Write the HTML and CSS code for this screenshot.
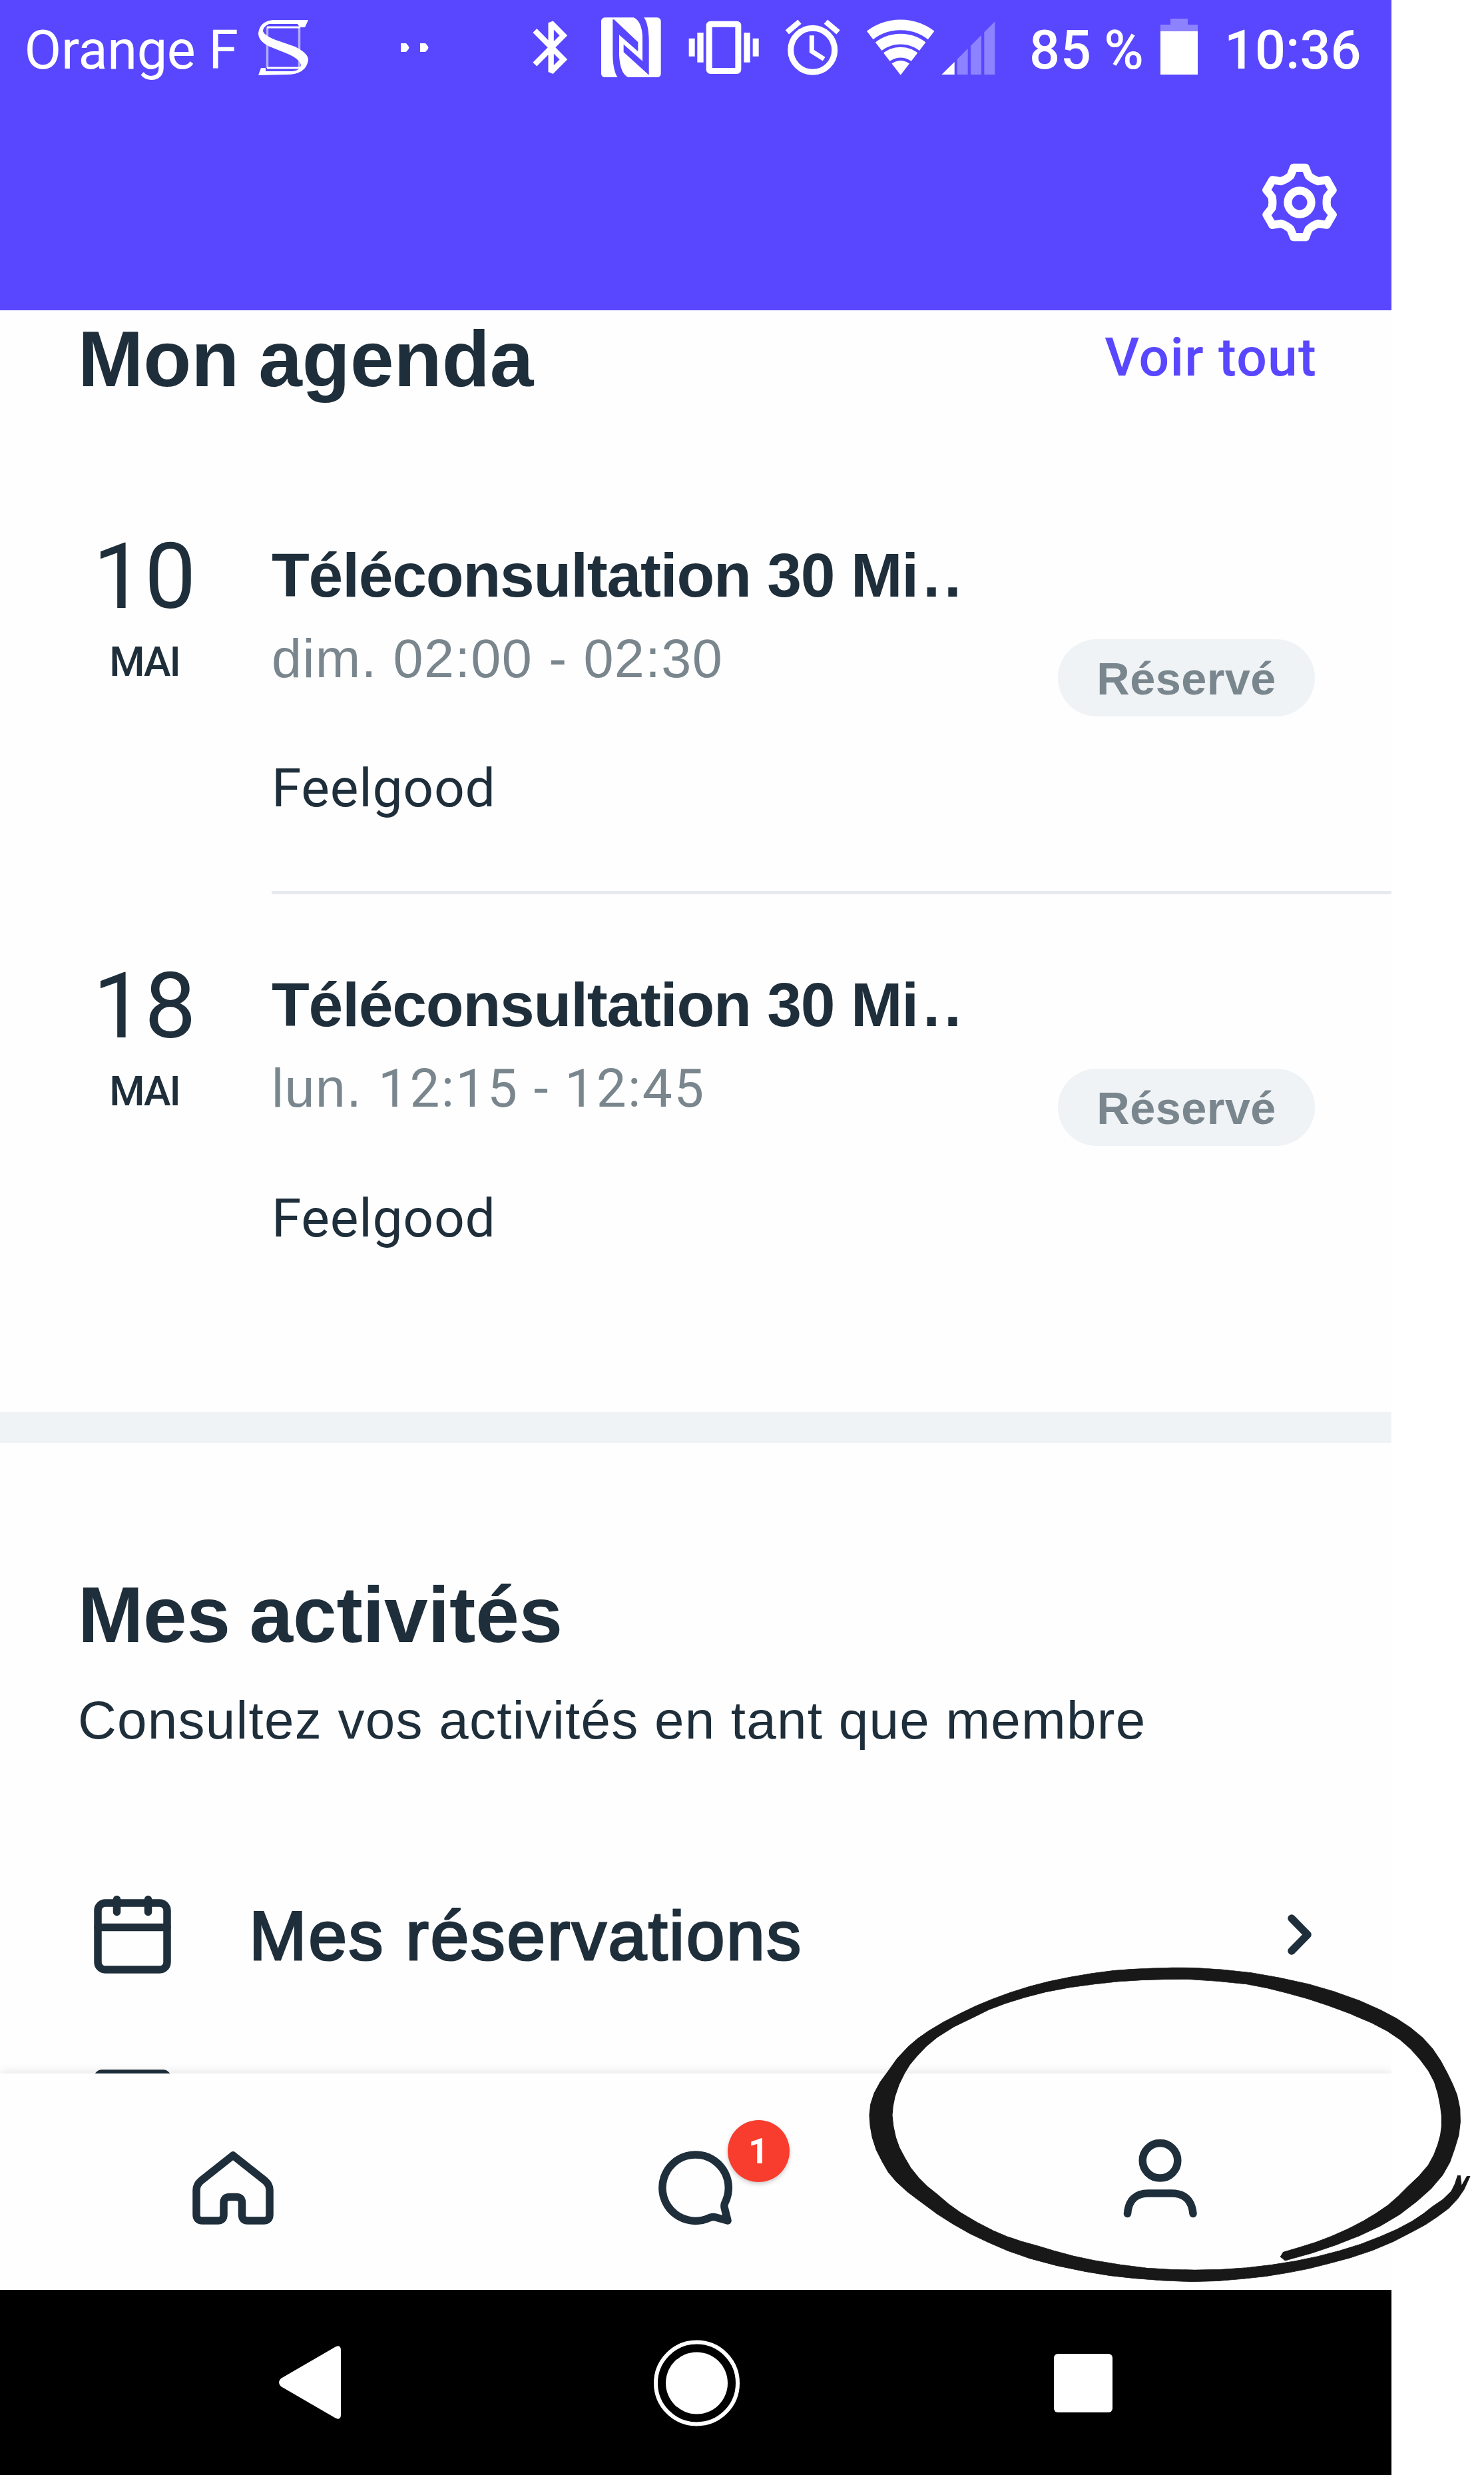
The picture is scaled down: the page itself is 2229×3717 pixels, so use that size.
FILE: index.html
```
<!DOCTYPE html>
<html lang="fr">
<head>
<meta charset="utf-8">
<title>Mon agenda</title>
<link rel="stylesheet" href="styles.css">
</head>
<body>
<div class="phone">
  <header class="topbar">
    <div class="status">
      <span class="carrier">Orange F</span>
      <svg class="status-icons" viewBox="380 0 1128 140" width="1128" height="140" fill="#fff">
        <!-- app notification -->
        <path d="M463 30 L458 41 H450 L447 36 H404 Q395 40 395 47 Q398 55 420 62 L443 70 Q463 80 463 90 Q460 112 430 112 L388 113 L392 102 H399 V107 H440 Q450 106 452 98 Q450 88 430 80 L405 70 Q388 62 388 50 Q390 32 410 30 Z"/>
        <path d="M401 41 H451 M401 102 H451" stroke="#fff" stroke-width="3"/>
        <path d="M401.500 41 V102 M449.500 41 V102" stroke="#fff" stroke-width="3.500" opacity=".55"/>
        <path d="M602 65 H610 Q614 69 614.500 71.500 Q614 74 610 78 H602 Z M631 65 H639 Q643 69 643.500 71.500 Q643 74 639 78 H631 Z"/>
        <g transform="translate(780 0) scale(.33333)">
          <!-- bluetooth -->
          <path d="M70 138 L199 268 L143 324 V103 L199 160 L70 290" fill="none" stroke="#fff" stroke-width="25" stroke-miterlimit="2"/>
          <!-- nfc -->
          <rect x="369" y="79" width="269" height="269" rx="16"/>
          <path class="cut" d="M421 88 H427 L535 190 V232 L450 157 V250 Q455 335 492 349 H443 Q423 320 421 250 Z"/>
          <path class="cut" d="M515 78 H561 Q582 105 584 180 V338 L470 235 V200 L555 275 V160 Q550 95 515 78 Z"/>
          <!-- vibrate -->
          <rect x="855.500" y="108.500" width="131" height="211" rx="6" fill="none" stroke="#fff" stroke-width="27"/>
          <path d="M764 173h27v81h-27z M802 147h28v134h-28z M1012 147h28v134h-28z M1052 173h27v81h-27z"/>
          <!-- alarm -->
          <g fill="none" stroke="#fff">
            <circle cx="1322" cy="226" r="99" stroke-width="27"/>
            <path d="M1318 160 V231 L1373 266" stroke-width="21"/>
            <path d="M1207 145 L1263 98 M1381 98 L1437 145" stroke-width="25"/>
          </g>
        </g>
        <g transform="translate(1290 0) scale(.33333)">
          <!-- wifi -->
          <clipPath id="wedge"><path d="M188 338 L-112 -52 H488 Z"/></clipPath>
          <g clip-path="url(#wedge)">
            <circle cx="188" cy="338" r="65"/>
            <g fill="none" stroke="#fff" stroke-width="47">
              <circle cx="188" cy="338" r="226"/><circle cx="188" cy="338" r="162"/><circle cx="188" cy="338" r="102"/>
            </g>
          </g>
          <!-- mobile signal -->
          <path d="M373 336 L431 279 V336 Z"/>
          <path class="dim" d="M443 267 L491 219 V336 H443 Z M504 206 L552 158 V336 H504 Z M565 145 L613 97 V336 H565 Z"/>
        </g>
      </svg>
      <span class="percent">85 %</span>
      <svg class="battery" viewBox="1740 0 62 140" width="62" height="140">
        <path class="dim" d="M1758 28 H1784 V37 H1799 V48 H1743 V37 H1758 Z"/>
        <path fill="#fff" d="M1743 47 H1799 V112 H1743 Z"/>
      </svg>
      <span class="clock">10:36</span>
    </div>
    <svg class="gear" viewBox="-61.500 -61.500 123 123" width="120" height="120">
      <defs><path id="tooth" d="M-9 -53.500 H9 L14 -41 Q20 -35.500 28.500 -32.600 L41.800 -34.600"/></defs>
      <use href="#tooth"/><use href="#tooth" transform="rotate(60)"/><use href="#tooth" transform="rotate(120)"/>
      <use href="#tooth" transform="rotate(180)"/><use href="#tooth" transform="rotate(240)"/><use href="#tooth" transform="rotate(300)"/>
      <circle r="18"/>
    </svg>
  </header>

  <main class="content">
    <section class="agenda">
      <div class="section-head">
        <h2>Mon agenda</h2>
        <a class="see-all">Voir tout</a>
      </div>
      <article class="event">
        <div class="date"><span class="day">10</span><span class="month">MAI</span></div>
        <div class="details ruled">
          <div class="info">
            <h3>Téléconsultation 30 M<span class="dots">i..</span></h3>
            <p class="time">dim. 02:00 - 02:30</p>
            <p class="place">Feelgood</p>
          </div>
          <span class="pill">Réservé</span>
        </div>
      </article>
      <article class="event">
        <div class="date"><span class="day">18</span><span class="month">MAI</span></div>
        <div class="details">
          <div class="info">
            <h3>Téléconsultation 30 M<span class="dots">i..</span></h3>
            <p class="time">lun. <span class="digits">12:15 - 12:45</span></p>
            <p class="place">Feelgood</p>
          </div>
          <span class="pill">Réservé</span>
        </div>
      </article>
    </section>

    <section class="activities">
      <h2>Mes activités</h2>
      <p class="subtitle">Consultez vos activités en tant que membre</p>
      <div class="row">
        <svg class="line-icon" viewBox="137 2837 124 140" width="124" height="140">
          <rect x="147" y="2858" width="104" height="100" rx="11"/>
          <path d="M147 2894.500 H251 M175.500 2852.500 V2871.500 M222.500 2852.500 V2871.500"/>
        </svg>
        <span class="row-label">Mes réservations</span>
        <svg class="line-icon chevron" viewBox="1925 2837 50 140" width="50" height="140">
          <path d="M1940 2881 L1964 2905.500 L1940 2930"/>
        </svg>
      </div>
      <div class="row">
        <svg class="line-icon" viewBox="137 3108 124 120" width="124" height="120">
          <rect x="147" y="3114" width="104" height="100" rx="6"/>
        </svg>
      </div>
    </section>
  </main>

  <nav class="tabs">
    <a class="tab">
      <svg class="line-icon" viewBox="278 3220 140 130" width="140" height="130">
        <path d="M350 3237 L398 3275 Q405 3281 405 3289 V3326 Q405 3335 396 3335 H372 Q363.500 3335 363.500 3326 V3308 Q363.500 3299.500 355 3299.500 H345 Q336 3299.500 336 3308 V3326 Q336 3335 327 3335 H304 Q295 3335 295 3326 V3289 Q295 3281 302 3275 Z"/>
      </svg>
    </a>
    <a class="tab">
      <svg class="line-icon" viewBox="975 3220 140 130" width="140" height="130">
        <path d="M1089 3308 A49.700 49.700 0 1 0 1065 3331 Q1070 3328.500 1075 3330 L1093 3335 L1088.500 3317 Q1087 3312 1089 3308 Z"/>
      </svg>
      <span class="badge">1</span>
    </a>
    <a class="tab">
      <svg class="line-icon" viewBox="1672 3200 140 150" width="140" height="150">
        <circle cx="1742.500" cy="3244.800" r="26.300"/>
        <path d="M1693.500 3324.500 Q1696 3294 1725 3294 H1760 Q1789 3294 1792 3324.500"/>
      </svg>
    </a>
  </nav>

  <footer class="system">
    <svg viewBox="0 3439 697 278" width="697" height="278">
      <path d="M422 3572 L503 3525 Q512 3520 512 3530 V3626 Q512 3636 503 3631 L422 3584 Q416 3578 422 3572 Z" fill="#fff"/>
    </svg>
    <svg viewBox="697 3439 696 278" width="696" height="278">
      <circle cx="1046.500" cy="3579" r="46.500" fill="#fff"/>
      <circle cx="1046.500" cy="3579" r="61.500" fill="none" stroke="#fff" stroke-width="6"/>
    </svg>
    <svg viewBox="1393 3439 697 278" width="697" height="278">
      <rect x="1583" y="3535" width="88" height="88" rx="6" fill="#fff"/>
    </svg>
  </footer>
</div>

<!-- hand-drawn highlight around the profile tab -->
<svg class="highlight" viewBox="0 0 1568 1560" preserveAspectRatio="none">
  <polygon points="1075,1395 1140,1362 1200,1325 1258,1284 1310,1240 1358,1188 1400,1130 1436,1072 1465,1010 1483,952 1495,890 1505,830 1509,770 1508,710 1501,650 1490,600 1476,548 1460,494 1440,440 1415,390 1385,345 1350,303 1310,265 1258,223 1200,185 1132,149 1060,120 990,98 920,84 850,76 795,75 740,78 695,82 650,88 595,101 540,118 489,137 440,160 394,186 350,215 308,247 270,280 228,319 190,360 163,394 140,430 112,484 90,540 70,590 55,640 46,690 43,740 45,790 50,840 60,896 75,950 90,997 110,1040 138,1086 170,1130 208,1181 250,1230 293,1274 340,1315 388,1352 440,1385 508,1418 580,1445 640,1463 700,1475 770,1485 840,1490 905,1487 970,1477 1026,1466 1080,1450 1131,1432 1180,1410 1237,1382 1290,1350 1342,1310 1390,1265 1422,1234 1450,1200 1480,1160 1503,1115 1518,1075 1533,1015 1526,1015 1512,1060 1509,1012 1503,1012 1496,1050 1487,1083 1466,1120 1440,1152 1416,1186 1390,1217 1352,1254 1310,1287 1262,1321 1210,1350 1156,1376 1100,1397 1041,1414 980,1427 915,1435 850,1437 790,1435 730,1428 665,1413 600,1394 549,1374 500,1350 459,1328 420,1308 384,1286 350,1260 309,1222 270,1180 239,1140 210,1095 186,1060 165,1022 145,977 130,930 117,886 108,840 102,790 99,740 101,700 106,655 116,602 130,550 143,512 160,475 183,431 210,390 252,342 300,300 339,265 380,237 429,209 480,185 539,165 600,150 660,138 720,131 775,128 830,127 906,136 980,150 1031,168 1080,190 1131,216 1180,245 1236,283 1290,325 1328,361 1360,400 1387,443 1410,490 1430,539 1445,590 1454,644 1460,700 1463,745 1463,790 1460,830 1454,870 1444,918 1430,965 1407,1014 1380,1060 1356,1104 1330,1145 1301,1181 1270,1215 1231,1252 1190,1285 1151,1312 1110,1335 1070,1357 1063,1378"/>
</svg>
</body>
</html>
```
FILE: styles.css
```
* { box-sizing: border-box; }

body {
  margin: 0;
  width: 2229px;
  height: 3717px;
  position: relative;
  overflow: hidden;
  background: #fff;
  color: #1e2e3a;
  font-family: "Liberation Sans", Arial, sans-serif;
}

h2, h3, p { margin: 0; }
svg { display: block; flex: none; }

.phone {
  width: 2090px;
  height: 3717px;
  display: flex;
  flex-direction: column;
  overflow: hidden;
  background: #fefefe;
}

/* top bar */
.topbar {
  height: 466px;
  background: #5847ff;
  color: #fff;
}
.status {
  display: flex;
  height: 152px;
  font: 400 81px/152px Roboto, sans-serif;
  white-space: nowrap;
}
.carrier { width: 380px; padding-left: 36.5px; letter-spacing: -.3px; }
.percent { width: 232px; padding-left: 38px; font-weight: 500; letter-spacing: 1px; word-spacing: -3px; }
.clock { padding-left: 37px; font-weight: 500; }
.dim { fill: #8d82ff; }
.cut { fill: #5847ff; }
.gear {
  margin: 91.5px 0 0 1892px;
  fill: none;
  stroke: #fff;
  stroke-width: 12.5;
  stroke-linejoin: round;
  stroke-linecap: round;
}

/* content */
.content { height: 2648px; overflow: hidden; flex: none; }
h2 {
  font-size: 118px;
  line-height: 146px;
  font-weight: 700;
  letter-spacing: 0;
  word-spacing: -4px;
}
.agenda { height: 1655px; }
.section-head {
  display: flex;
  justify-content: space-between;
  height: 234px;
  padding: 0 112px 0 117px;
}
.see-all {
  font: 500 80.5px/141px Roboto, sans-serif;
  letter-spacing: 1.2px;
  color: #5847ff;
}
.event { display: flex; height: 643px; }
.event + .event { margin-top: 2px; }
.date {
  width: 408px;
  padding: 86px 0 0 26px;
  display: flex;
  flex-direction: column;
  align-items: center;
  font-family: Roboto, sans-serif;
}
.day { font-size: 138px; line-height: 160px; }
.month { font-size: 61px; line-height: 96px; font-weight: 500; letter-spacing: -2px; }
.details {
  flex: 1;
  display: flex;
  justify-content: space-between;
  align-items: flex-start;
  padding-right: 115px;
}
.ruled { border-bottom: 5px solid #e6eaee; }
.info { padding-top: 104px; }
h3 { font-size: 93px; line-height: 120px; letter-spacing: -1.2px; }
.dots { letter-spacing: 6px; }
.time {
  font-size: 81px;
  line-height: 130px;
  letter-spacing: 1.4px;
  color: #7a868d;
}
.digits { font-family: Roboto, sans-serif; font-size: 80px; letter-spacing: 2.4px; }
.place { margin-top: 65px; font: 400 80.5px/130px Roboto, sans-serif; letter-spacing: .7px; }
.pill {
  width: 386px;
  height: 116px;
  margin-top: 260px;
  border-radius: 58px;
  background: #eff3f6;
  color: #7a868d;
  font-size: 68.5px;
  font-weight: 700;
  line-height: 120px;
  letter-spacing: .4px;
  text-align: center;
}

.activities { border-top: 46px solid #eff3f6; padding: 185px 115px 0 117px; }
.activities h2 { letter-spacing: -.2px; }
.subtitle { margin-top: 20px; font-size: 80px; line-height: 131px; letter-spacing: 1.25px; }
.row { display: flex; height: 140px; margin: 188px 0 0 20px; }
.row + .row { margin-top: 131px; }
.row-label {
  margin-left: 113px;
  font-size: 104px;
  line-height: 140px;
  letter-spacing: 2.5px;
  -webkit-text-stroke: 3px currentColor;
}
.chevron { margin-left: auto; }
.line-icon {
  fill: none;
  stroke: #1e2e3a;
  stroke-width: 11.5;
  stroke-linecap: round;
  stroke-linejoin: round;
}

/* tab bar */
.tabs {
  display: grid;
  grid-template-columns: repeat(3, 1fr);
  flex: none;
  height: 325px;
  background: #fefefe;
  box-shadow: 0 -2px 14px rgba(0, 0, 0, .1);
  position: relative;
}
.tab { position: relative; display: flex; justify-content: center; padding-top: 106px; }
.tab:last-child { padding-top: 86px; }
.badge {
  position: absolute;
  left: 396px;
  top: 70px;
  width: 93px;
  height: 93px;
  border-radius: 50%;
  background: #f83c2d;
  color: #fff;
  font: 700 53px/95px Roboto, sans-serif;
  text-align: center;
  box-shadow: 0 3px 6px rgba(0, 0, 0, .2);
}

.system { display: flex; flex: none; height: 278px; background: #000; }

.highlight {
  position: absolute;
  left: 1280px;
  top: 2930px;
  width: 949px;
  height: 520px;
  fill: #181818;
  stroke: #181818;
  stroke-width: 2;
  stroke-linejoin: round;
}
```
